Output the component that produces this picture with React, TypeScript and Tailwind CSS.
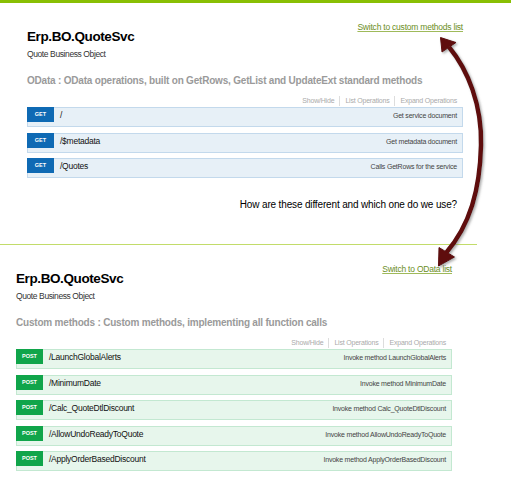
import React from "react";

type Op = { path: string; summary: string };

const odataOps: Op[] = [
  { path: "/", summary: "Get service document" },
  { path: "/$metadata", summary: "Get metadata document" },
  { path: "/Quotes", summary: "Calls GetRows for the service" },
];

const customOps: Op[] = [
  { path: "/LaunchGlobalAlerts", summary: "Invoke method LaunchGlobalAlerts" },
  { path: "/MinimumDate", summary: "Invoke method MinimumDate" },
  { path: "/Calc_QuoteDtlDiscount", summary: "Invoke method Calc_QuoteDtlDiscount" },
  { path: "/AllowUndoReadyToQuote", summary: "Invoke method AllowUndoReadyToQuote" },
  { path: "/ApplyOrderBasedDiscount", summary: "Invoke method ApplyOrderBasedDiscount" },
];

function OpRow({ op, method }: { op: Op; method: "GET" | "POST" }) {
  const isGet = method === "GET";
  return (
    <div
      className={`flex h-[20px] items-start border ${
        isGet ? "border-[#c3d9ec] bg-[#e7f0f7]" : "border-[#c3e8d1] bg-[#e7f6ec]"
      }`}
    >
      <span
        className={`-ml-px -mt-px flex h-[15px] w-[27px] shrink-0 items-center justify-center text-[5.5px] font-bold uppercase text-white ${
          isGet ? "bg-[#0f6ab4]" : "bg-[#10a54a]"
        }`}
      >
        {method}
      </span>
      <span className="ml-[6px] pt-[1px] text-[8.5px] leading-[12px] tracking-[-0.25px] text-[#111]">
        {op.path}
      </span>
      <span className="ml-auto pr-[5px] pt-[3px] text-[7px] leading-[10px] tracking-[-0.2px] text-[#444]">
        {op.summary}
      </span>
    </div>
  );
}

function Resource({
  switchLabel,
  heading,
  method,
  ops,
  padLeft,
}: {
  switchLabel: string;
  heading: string;
  method: "GET" | "POST";
  ops: Op[];
  padLeft: string;
}) {
  return (
    <div className={`${padLeft} w-[463px]`}>
      <div className="flex w-[436px] items-start justify-between">
        <div className="pt-[7px]">
          <h1 className="text-[13.5px] font-bold leading-[18px] tracking-[-0.4px] text-black">
            Erp.BO.QuoteSvc
          </h1>
          <p className="mt-[2.5px] text-[8.5px] leading-[11px] tracking-[-0.4px] text-[#333]">
            Quote Business Object
          </p>
        </div>
        <a className="text-[8.5px] leading-[12px] tracking-[-0.22px] text-[#6b8e23] underline decoration-[#9fba5a]">
          {switchLabel}
        </a>
      </div>
      <h2 className="mt-[14.5px] w-[460px] whitespace-nowrap text-[10px] font-bold leading-[14px] tracking-[-0.2px] text-[#9a9a9a]">
        {heading}
      </h2>
      <div className="mt-[8px] flex w-[436px] justify-end pr-[6px] text-[7px] leading-[10px] tracking-[-0.2px] text-[#aaa]">
        <span className="pr-[5px]">Show/Hide</span>
        <span className="border-l border-[#ddd] px-[5px]">List Operations</span>
        <span className="border-l border-[#ddd] pl-[5px]">Expand Operations</span>
      </div>
      <div className="mt-[1px] flex w-[436px] flex-col gap-[5.5px]">
        {ops.map((op) => (
          <OpRow key={op.path} op={op} method={method} />
        ))}
      </div>
    </div>
  );
}

function Arrow() {
  return (
    <svg className="pointer-events-none absolute left-0 top-0" width="511" height="499" viewBox="0 0 511 499">
      <defs>
        <filter id="sh" x="-20%" y="-20%" width="140%" height="140%">
          <feDropShadow dx="1.5" dy="1.5" stdDeviation="1" floodColor="#777" floodOpacity="0.6" />
        </filter>
      </defs>
      <g filter="url(#sh)" fill="#5e0a0a" stroke="#5e0a0a">
        <path d="M449 47 C 468 70, 482 105, 481 145 C 480 190, 470 225, 446 253" fill="none" strokeWidth="4.5" />
        <polygon points="440.5,37.5 442,52 456,42.5" strokeWidth="1" strokeLinejoin="round" />
        <polygon points="438.5,266 439,247.5 454.5,257" strokeWidth="1" strokeLinejoin="round" />
      </g>
    </svg>
  );
}

export default function App() {
  return (
    <div className="relative h-[499px] w-[511px] overflow-hidden bg-white font-['Liberation_Sans',Arial,sans-serif]">
      <div className="h-[3px] w-full bg-[#89bf04]" />
      <div className="pt-[18px]">
        <Resource
          switchLabel="Switch to custom methods list"
          heading="OData : OData operations, built on GetRows, GetList and UpdateExt standard methods"
          method="GET"
          ops={odataOps}
          padLeft="pl-[27px]"
        />
      </div>
      <div className="mt-[20px] flex w-[463px] justify-end pr-[6px]">
        <p className="text-[10px] leading-[14px] tracking-[-0.15px] text-black">
          How are these different and which one do we use?
        </p>
      </div>
      <div className="mt-[32px] h-px w-[477px] bg-[#c2dc6a]" />
      <div className="pt-[18px]">
        <Resource
          switchLabel="Switch to OData list"
          heading="Custom methods : Custom methods, implementing all function calls"
          method="POST"
          ops={customOps}
          padLeft="pl-[16px]"
        />
      </div>
      <Arrow />
    </div>
  );
}
